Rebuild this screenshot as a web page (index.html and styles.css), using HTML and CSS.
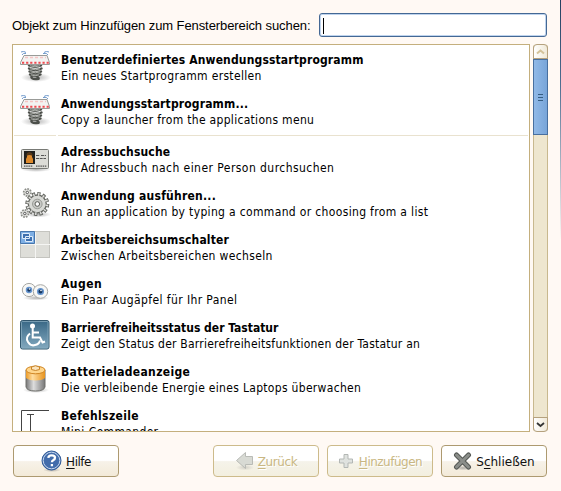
FILE: index.html
```
<!DOCTYPE html>
<html lang="de">
<head>
<meta charset="utf-8">
<title>Zum Panel hinzufügen</title>
<link rel="stylesheet" href="styles.css">
</head>
<body>
<svg class="defs" width="0" height="0">
  <defs>
    <linearGradient id="steel" x2="1" y2="0"><stop offset="0" stop-color="#777"/><stop offset=".4" stop-color="#ddd"/><stop offset="1" stop-color="#777"/></linearGradient>
    <linearGradient id="gold" x2="1" y2="0"><stop offset="0" stop-color="#ec9b26"/><stop offset=".35" stop-color="#ffdda0"/><stop offset="1" stop-color="#e8931c"/></linearGradient>
    <linearGradient id="access" x2="0" y2="1"><stop offset="0" stop-color="#386785"/><stop offset="1" stop-color="#83a9bf"/></linearGradient>
    <radialGradient id="shadow"><stop offset="0" stop-color="#777" stop-opacity=".55"/><stop offset="1" stop-color="#777" stop-opacity="0"/></radialGradient>
    <symbol id="spring" viewBox="0 0 32 32">
      <ellipse cx="16" cy="26.500" rx="15" ry="4.500" fill="url(#shadow)"/>
      <g fill="none" stroke="#4c4f4a" stroke-width="2.400" stroke-linecap="round"><path d="M9 14.500q6 2.500 12 0M9 17.500q6 3 12.500 0M9.500 20.500q6 3 11.500 0M10 23.500q5 2.500 10.500 0M11.500 24.500q-1 4 5 3.500 4 .2 1-2"/></g>
      <g fill="none" stroke="#c9ccc5" stroke-width=".8"><path d="M10 14.800q5 2 10 0M10 17.800q6 2 10 0M10.500 20.800q5 2 9.500 0M11 23.800q4 2 8 0"/></g>
      <path d="M4 4.500h23l2.500 7v2H.5v-2z" fill="#f3f3f2" stroke="#999b98"/>
      <path d="M5 6.500h21" stroke="#f5c4c4" stroke-width="1.500" stroke-dasharray="3 2"/>
      <path d="M2 11.700h27" stroke="#ee4a50" stroke-width="1.900" stroke-dasharray="2.200 1.900"/>
      <path d="M2 4q1-2.500 4-1.500M1 1Q4-.5 6 1.500M23 2.500q4-1 5 1.500M24 1.500q2-2 5-.5" fill="none" stroke="#729bcc"/>
    </symbol>
  </defs>
</svg>
<main class="dialog">
  <div class="search">
    <label for="q">Objekt zum Hinzufügen zum Fensterbereich suchen:</label>
    <div class="field" id="q"><span class="caret"></span></div>
  </div>
  <div class="browser">
    <ul class="list">
      <li><svg class="icon" viewBox="0 0 32 32"><use href="#spring"/></svg><div><b>Benutzerdefiniertes Anwendungsstartprogramm</b><p>Ein neues Startprogramm erstellen</p></div></li>
      <li><svg class="icon" viewBox="0 0 32 32"><use href="#spring"/></svg><div><b>Anwendungsstartprogramm...</b><p>Copy a launcher from the applications menu</p></div></li>
      <li class="rule"><i></i><i></i></li>
      <li><svg class="icon" viewBox="0 0 32 32">
        <ellipse cx="16" cy="26.500" rx="15" ry="2.500" fill="url(#shadow)"/>
        <rect x="1.500" y="6.500" width="27" height="19" rx="1" fill="#dcdcd7" stroke="#777975"/>
        <rect x="4" y="8" width="11" height="13" fill="#20201e"/><path d="M6 20v-4l1-2V11q2-2 5 0v3l1 2v4z" fill="#dd8a2d"/><path d="M6.500 11q3-4 6 0v2q-3-2-6 0z" fill="#553718"/>
        <path d="M16 12.500h4m1 0h5M16 15.500h10" stroke="#555" stroke-width="1.200" stroke-dasharray="3 .7"/><path d="M4 23.200h9m3 0h11" stroke="#555" stroke-width="1.200" stroke-dasharray="1.500 .7"/></svg><div><b>Adressbuchsuche</b><p>Ihr Adressbuch nach einer Person durchsuchen</p></div></li>
      <li><svg class="icon" viewBox="0 0 32 32">
        <ellipse cx="18" cy="27.500" rx="13" ry="3" fill="url(#shadow)"/>
        <g fill="none"><circle cx="17.300" cy="17" r="10.200" stroke="#666863" stroke-width="3.600" pathLength="24" stroke-dasharray="1.200 .8"/><circle cx="17.300" cy="17" r="9" fill="#d9dad6" stroke="#666863" stroke-width="1.400"/><circle cx="17.300" cy="17" r="9.600" stroke="#dededb" stroke-width="2.800" pathLength="24" stroke-dasharray=".6 1.400" stroke-dashoffset="-.3"/>
        <circle cx="17.300" cy="17" r="4.800" fill="#c8c9c5" stroke="#9a9c97"/><circle cx="17.300" cy="17" r="2.300" fill="#fff" stroke="#5c5e59"/>
        <g id="cog"><circle cx="7.300" cy="5.500" r="3.400" fill="#dcddd9" stroke="#8b8d88" stroke-width="2.200" pathLength="16" stroke-dasharray="1.200 .8"/><circle cx="7.300" cy="5.500" r="2.800" fill="#dcddd9"/><circle cx="7.300" cy="5.500" r="1.200" fill="#fff" stroke="#555"/></g><use href="#cog" x="-2.500" y="21"/></g></svg><div><b>Anwendung ausführen...</b><p>Run an application by typing a command or choosing from a list</p></div></li>
      <li><svg class="icon" viewBox="0 0 32 32">
        <rect x=".5" y=".5" width="29" height="26" fill="#deded9" stroke="#c4c4bf"/><path d="M15.500 1v26M1 13.500h29" stroke="#f5f5f3"/>
        <path d="M.5.500h14v12H.5z" fill="#7eafe4" stroke="#4776ad"/><path d="M2.500 2.500h7v5h-7zM5.500 5.500h7v5h-7z" fill="#3d6fae" stroke="#dceaf9"/></svg><div><b>Arbeitsbereichsumschalter</b><p>Zwischen Arbeitsbereichen wechseln</p></div></li>
      <li><svg class="icon" viewBox="0 0 32 32">
        <ellipse cx="16" cy="23" rx="13" ry="2.500" fill="url(#shadow)"/><g fill="#f7f7f5" stroke="#a7a8a5"><ellipse cx="9" cy="15" rx="6.700" ry="6.600"/><ellipse cx="20.500" cy="16.500" rx="7.200" ry="6.800"/></g><g fill="#16375f" stroke="#6796d0" stroke-width="1.500"><circle cx="9" cy="15" r="2.500"/><circle cx="20.500" cy="16.500" r="2.800"/></g><g fill="#fff"><circle cx="9.500" cy="14" r=".8"/><circle cx="21" cy="15.500" r=".8"/></g></svg><div><b>Augen</b><p>Ein Paar Augäpfel für Ihr Panel</p></div></li>
      <li><svg class="icon" viewBox="0 0 32 32">
        <rect x=".5" y="1.500" width="28.500" height="28.500" rx="2" fill="url(#access)" stroke="#31566d"/><rect x="1.500" y="2.500" width="26.500" height="26.500" rx="1" fill="none" stroke="#87a9bc" stroke-width=".8"/>
        <circle cx="12.500" cy="7" r="2.500" fill="#fff"/><g fill="none" stroke="#fff" stroke-width="2"><path d="M12.700 9v9.500h7.300l2.500 5 2.500-1M13 13.500h6"/><path d="M10 14.500q-5 4-2 8.500t7 3q4-.5 5-4.500"/></g></svg><div><b>Barrierefreiheitsstatus der Tastatur</b><p>Zeigt den Status der Barrierefreiheitsfunktionen der Tastatur an</p></div></li>
      <li><svg class="icon" viewBox="0 0 32 32">
        <ellipse cx="16" cy="27" rx="13" ry="3" fill="url(#shadow)"/><path d="M6 7v17q1 4 9.500 4t9.500-4V7z" fill="url(#steel)" stroke="#70716d"/><path d="M6 6v9q3 2.500 9.500 2.500t9.500-2.500V6z" fill="url(#gold)"/><ellipse cx="15.500" cy="7" rx="9.500" ry="3.800" fill="#ffd68c" stroke="#cf8422"/><path d="M11.500 4q4-2.500 8 0v2.500q-4 2-8 0z" fill="#fbe4bd" stroke="#c98529"/></svg><div><b>Batterieladeanzeige</b><p>Die verbleibende Energie eines Laptops überwachen</p></div></li>
      <li><svg class="icon" viewBox="0 0 32 32"><path d="M1.500 32V3.500H29M7 7.500h7M10.500 8v24" fill="none" stroke="#444"/></svg><div><b>Befehlszeile</b><p>Mini-Commander</p></div></li>
    </ul>
    <div class="scroll">
      <div class="arrow up"><svg width="9" height="6"><path d="M1 4.500l3.500-3 3.500 3" fill="none" stroke="#d3c29a" stroke-width="2"/></svg></div>
      <div class="thumb"><i></i><i></i><i></i></div>
      <div class="arrow down"><svg width="9" height="6"><path d="M1 1l3.500 3L8 1" fill="none" stroke="#333" stroke-width="1.800"/></svg></div>
    </div>
  </div>
  <div class="actions">
    <button class="help"><svg width="22" height="22"><ellipse cx="11" cy="20" rx="9" ry="2" fill="url(#shadow)"/><circle cx="10.500" cy="10.500" r="9.500" fill="#426cab" stroke="#315b98"/><circle cx="10.500" cy="10.500" r="8.300" fill="none" stroke="#c5d7ef"/><path d="M7.300 7.800q.2-2.500 3.300-2.500 3.400 0 3.400 2.500 0 1.700-1.800 2.500-1.300.7-1.300 2M10.900 14v2.200" fill="none" stroke="#fff" stroke-width="2.300"/></svg><span><u>H</u>ilfe</span></button>
    <button class="off back"><svg width="20" height="20"><ellipse cx="10" cy="16.500" rx="9" ry="3" fill="url(#shadow)" opacity=".5"/><path d="M1.500 9.500L10.500 1.500V5.500h7v8h-7v4z" fill="#d8dad4" stroke="#b9bbb6"/></svg><span><u>Z</u>urück</span></button>
    <button class="off add"><svg width="16" height="16"><path d="M6 1.500h4V6h4.500v4H10v4.500H6V10H1.500V6H6z" fill="#dfe2df" stroke="#b3b7b4"/></svg><span><u>H</u>inzufügen</span></button>
    <button class="close"><svg width="20" height="20"><ellipse cx="10" cy="17" rx="9" ry="2.500" fill="url(#shadow)"/><path d="M3.500 4L15.500 16M15.500 4L3.500 16" stroke="#555855" stroke-width="5" stroke-linecap="round"/><path d="M3.500 4L15.500 16M15.500 4L3.500 16" stroke="#8b8e8a" stroke-width="3" stroke-linecap="round"/></svg><span>S<u>c</u>hließen</span></button>
  </div>
</main>
<div class="edge"></div>
</body>
</html>
```
FILE: styles.css
```
* { box-sizing: border-box; }
body { margin: 0; width: 561px; height: 491px; overflow: hidden; display: flex; background: #fff9f4; color: #000; font-family: "DejaVu Sans", sans-serif; font-size: 12px; }
.defs { position: absolute; }
.dialog { width: 560px; padding: 13px 12px 0; }
.edge { width: 1px; height: 240px; background: linear-gradient(#243f60, #4e6e91 35%, #fff9f4); }
.search { display: flex; align-items: center; height: 24px; }
.search label { width: 307px; font: 13px "Liberation Sans", sans-serif; letter-spacing: -.09px; white-space: nowrap; }
.field { width: 228px; height: 24px; border: 1px solid #446894; border-radius: 3px; background: #fff; box-shadow: inset 0 0 0 1px #bed3ed; padding: 4px 3px; }
.caret { display: block; width: 1px; height: 16px; background: #000; }
.browser { display: flex; gap: 3px; margin-top: 7px; }
.list { width: 518px; height: 388px; margin: 0; padding: 2px 1px 0; overflow: hidden; list-style: none; background: #fff; border: 1px solid #c4af7d; font-family: "DejaVu Sans Condensed", "DejaVu Sans", sans-serif; font-stretch: semi-condensed; }
.list li { display: flex; height: 44px; padding-left: 6px; }
.list li > div { margin-left: 9px; padding-top: 5px; white-space: nowrap; }
.icon { width: 32px; height: 32px; margin-top: 4px; }
.list b, .list p { display: block; height: 16px; margin: 0; line-height: 16px; }
.list b { letter-spacing: .15px; }
.list p { letter-spacing: .34px; }
.list li:nth-child(2) p { letter-spacing: .3px; }
.list li:nth-child(4) b { letter-spacing: .18px; }
.list li:nth-child(4) p { letter-spacing: .45px; }
.list li:nth-child(5) b { letter-spacing: .24px; }
.list li:nth-child(7) b { letter-spacing: .5px; }
.list li:nth-child(7) p { letter-spacing: .4px; }
.list li:nth-child(8) b { letter-spacing: 0; }
.list li:nth-child(8) p { letter-spacing: .23px; }
.list li:nth-child(9) b { letter-spacing: .33px; }
.list li:nth-child(9) p { letter-spacing: .31px; }
.list li:nth-child(10) b { letter-spacing: .36px; }
.list .rule { height: 4px; padding: 0; gap: 2px; align-items: flex-start; }
.rule i { height: 1px; width: 42px; background: #e9e2cf; }
.rule i + i { flex: 1; }
.scroll { width: 15px; height: 388px; display: flex; flex-direction: column; background: linear-gradient(90deg, #c8b88e 1px, #eee6cf 1px 14px, #c8b88e 14px); border-radius: 4px; }
.arrow { height: 15px; border: 1px solid #b5a17e; background: linear-gradient(90deg, #fff, #f0e9d8); display: flex; align-items: center; justify-content: center; }
.up { border-radius: 4px 4px 0 0; }
.down { border-radius: 0 0 4px 4px; margin-top: auto; }
.thumb { height: 76px; border: 1px solid #486f9f; background: linear-gradient(90deg, #91b9e7, #78a5d9); display: flex; flex-direction: column; align-items: center; justify-content: center; gap: 2px; }
.thumb i { width: 5px; height: 1px; background: #365e83; }
.actions { display: flex; gap: 8px; margin: 13px 0 0 1px; }
button { width: 106px; height: 32px; padding: 0; border: 1px solid #ad9a70; border-radius: 4px; background: linear-gradient(#fff 0 48%, #f7f2e9 52%, #f3ead8); color: #111; font: 12px "DejaVu Sans", sans-serif; display: flex; align-items: center; justify-content: center; gap: 3px; white-space: nowrap; }
button span { padding-top: 1px; }
.help { margin-right: 86px; letter-spacing: -.5px; }
.back { letter-spacing: -.4px; }
.add { letter-spacing: -.5px; gap: 5px; }
.off { border-color: #cdbb8b; color: #c9b783; background: linear-gradient(#fff 0 48%, #f5f3ea 52%, #f3efdf); text-shadow: 1px 1px #fff; }
u { text-underline-offset: 2px; }
```
